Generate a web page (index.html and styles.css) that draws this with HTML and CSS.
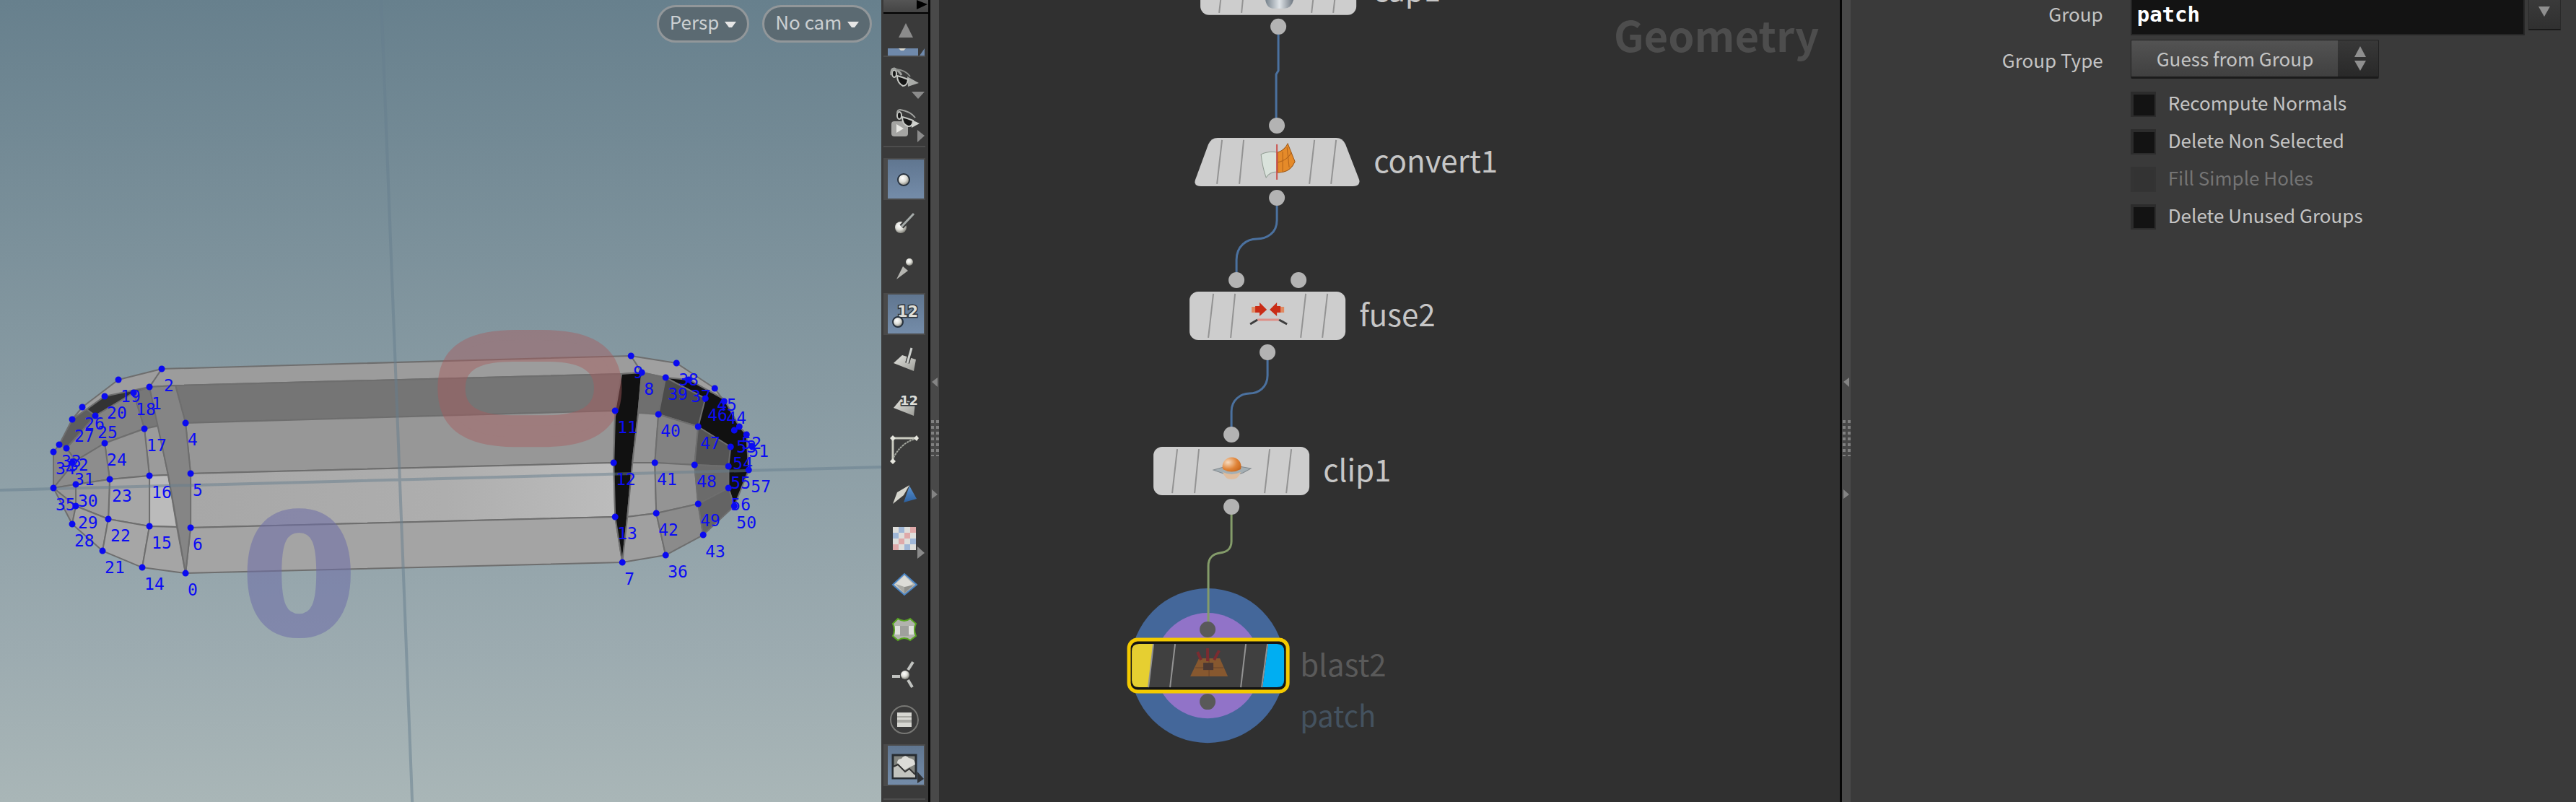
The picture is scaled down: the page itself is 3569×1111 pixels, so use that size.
FILE: index.html
```html
<!DOCTYPE html>
<html lang="en">
<head>
<meta charset="utf-8">
<title>Geometry</title>
<link rel="stylesheet" href="styles.css">
</head>
<body>
<main class="workspace">
  <section class="viewport" aria-label="Scene view">
    <svg class="scene" viewBox="0 0 1221 1111" preserveAspectRatio="xMidYMid slice">
      <defs>
        <linearGradient id="band" x1="0" x2="1" y1="0" y2="0">
          <stop offset="0" stop-color="#a7a7a7"/><stop offset=".6" stop-color="#aeaeae"/><stop offset="1" stop-color="#bcbcbc"/>
        </linearGradient>
      </defs>
      <g class="mesh">
        <path fill="#9c9c9c" d="M224 511 874 493 889 516 861 518 243 534 207 536Z"/>
        <path fill="#757575" d="M243 534 861 518 852 569 257 586Z"/>
        <path fill="#979797" d="M257 586 852 569 850 641 264 656Z"/>
        <path fill="url(#band)" d="M264 656 850 641 852 716 264 731Z"/>
        <path fill="#a4a4a4" d="M264 731 852 716 862 779 257 794Z"/>
        <path fill="#9e9e9e" d="M164 526 224 511 207 536 185 544 145 549 120 567 100 581 114 564Z"/>
        <path fill="#333" d="M120 567 145 549 207 536 185 545 132 576Z"/>
        <path fill="#5e5e5e" d="M120 567 132 576 92 621 82 616 100 581Z"/>
        <path fill="#777" d="M185 544 207 536 219 590 200 594Z"/>
        <path fill="#838383" d="M185 544 200 594 145 614 105 638 92 621 132 576Z"/>
        <path fill="#878787" d="M82 616 92 621 105 638 74 676 74 626Z"/>
        <path fill="#9b9b9b" d="M200 594 219 590 233 658 207 659Z"/>
        <path fill="#959595" d="M145 614 200 594 207 659 152 664Z"/>
        <path fill="#8d8d8d" d="M145 614 152 664 105 671 74 676 105 638Z"/>
        <path fill="#bbb" d="M207 659 233 658 245 730 207 729Z"/>
        <path fill="#a6a6a6" d="M152 664 207 659 207 729 150 719Z"/>
        <path fill="#9d9d9d" d="M105 671 152 664 150 719 105 701Z"/>
        <path fill="#999" d="M74 676 105 671 105 701Z"/>
        <path fill="#949494" d="M74 676 105 701 100 726Z"/>
        <path fill="#a2a2a2" d="M105 701 150 719 142 763 100 726Z"/>
        <path fill="#a6a6a6" d="M150 719 207 729 197 786 142 763Z"/>
        <path fill="#a5a5a5" d="M207 729 245 730 257 794 197 786Z"/>
        <path fill="#858585" d="M207 536 243 534 257 586 264 656 264 731 257 794 233 658Z"/>
        <path fill="#111" d="M861 518 889 516 884 572 876 641 869 716 862 779 852 716 850 641 852 569Z"/>
        <path fill="#a0a0a0" d="M874 493 937 503 990 538 1003 556 954 530 889 516Z"/>
        <path fill="#111" d="M922 523 954 526 1003 553 1024 591 1034 602 1037 651 1017 701 1009 676 1009 646 967 591Z"/>
        <path fill="#6f6f6f" d="M889 516 922 523 912 574 884 572Z"/>
        <path fill="#4b4b4b" d="M922 523 977 552 967 591 912 574Z"/>
        <path fill="#969696" d="M884 572 912 574 907 641 876 641Z"/>
        <path fill="#828282" d="M912 574 967 591 962 644 907 641Z"/>
        <path fill="#545454" d="M967 591 1012 619 1009 646 962 644Z"/>
        <path fill="#a4a4a4" d="M876 641 907 641 909 711 869 716Z"/>
        <path fill="#949494" d="M907 641 962 644 967 698 909 711Z"/>
        <path fill="#6b6b6b" d="M962 644 1009 646 1009 676 967 698Z"/>
        <path fill="#a0a0a0" d="M869 716 909 711 922 769 862 779Z"/>
        <path fill="#8b8b8b" d="M909 711 967 698 974 741 922 769Z"/>
        <path fill="#646464" d="M967 698 1009 676 1017 701 974 741Z"/>
      </g>
      <path class="grid-line" d="M0 679 1221 647M528 0 571 1111"/>
      <text class="marker red" transform="translate(603 615) rotate(-90)" x="77" y="248">0</text>
      <text class="marker blue" x="414" y="879">0</text>
      <path class="points" d="M224 511h0M164 526h0M207 536h0M185 544h0M145 549h0M114 564h0M132 576h0M100 581h0M200 594h0M145 614h0M257 586h0M82 616h0M92 621h0M74 626h0M264 656h0M207 659h0M152 664h0M100 641h0M105 671h0M74 676h0M105 701h0M100 726h0M150 719h0M207 729h0M264 731h0M142 763h0M197 786h0M257 794h0M874 493h0M937 503h0M889 516h0M922 523h0M954 526h0M990 538h0M977 552h0M1003 556h0M852 569h0M912 574h0M967 591h0M1017 596h0M1024 591h0M1034 602h0M1012 619h0M1041 618h0M850 641h0M907 641h0M962 644h0M1009 646h0M1037 651h0M1009 676h0M852 716h0M909 711h0M967 698h0M1017 701h0M974 741h0M922 769h0M862 779h0"/>
      <g class="point-numbers" transform="translate(3 31)">
        <text x="224" y="511">2</text><text x="164" y="526">19</text><text x="207" y="536">1</text><text x="185" y="544">18</text>
        <text x="145" y="549">20</text><text x="114" y="564">26</text><text x="132" y="576">25</text><text x="100" y="581">27</text>
        <text x="200" y="594">17</text><text x="145" y="614">24</text><text x="257" y="586">4</text><text x="82" y="616">33</text>
        <text x="92" y="621">32</text><text x="74" y="626">34</text><text x="264" y="656">5</text><text x="207" y="659">16</text>
        <text x="152" y="664">23</text><text x="100" y="641">31</text><text x="105" y="671">30</text><text x="74" y="676">35</text>
        <text x="105" y="701">29</text><text x="100" y="726">28</text><text x="150" y="719">22</text><text x="207" y="729">15</text>
        <text x="264" y="731">6</text><text x="142" y="763">21</text><text x="197" y="786">14</text><text x="257" y="794">0</text>
        <text x="874" y="493">9</text><text x="937" y="503">38</text><text x="889" y="516">8</text><text x="922" y="523">39</text>
        <text x="954" y="526">37</text><text x="990" y="538">45</text><text x="977" y="552">46</text><text x="1003" y="556">44</text>
        <text x="852" y="569">11</text><text x="912" y="574">40</text><text x="967" y="591">47</text><text x="1017" y="596">53</text>
        <text x="1024" y="591">52</text><text x="1034" y="602">51</text><text x="1012" y="619">54</text><text x="850" y="641">12</text>
        <text x="907" y="641">41</text><text x="962" y="644">48</text><text x="1009" y="646">55</text><text x="1037" y="651">57</text>
        <text x="1009" y="676">56</text><text x="852" y="716">13</text><text x="909" y="711">42</text><text x="967" y="698">49</text>
        <text x="1017" y="701">50</text><text x="974" y="741">43</text><text x="922" y="769">36</text><text x="862" y="779">7</text>
      </g>
    </svg>
    <div class="view-menus">
      <button type="button" class="pill">Persp<svg class="caret" viewBox="0 0 16 9"><path d="M0 0h16l-6 8h-4Z"/></svg></button>
      <button type="button" class="pill">No cam<svg class="caret" viewBox="0 0 16 9"><path d="M0 0h16l-6 8h-4Z"/></svg></button>
    </div>
  </section>

  <aside class="toolbar" aria-label="Display options">
    <svg class="shared-defs" aria-hidden="true">
      <defs>
        <radialGradient id="ball" cx=".4" cy=".35" r=".7"><stop offset="0" stop-color="#fff"/><stop offset=".5" stop-color="#deded8"/><stop offset="1" stop-color="#77776f"/></radialGradient>
        <linearGradient id="plate" x1="0" y1="0" x2="1" y2="1"><stop offset="0" stop-color="#e4e4df"/><stop offset="1" stop-color="#9b9c97"/></linearGradient>
        <linearGradient id="bluePlate" x1="0" y1="0" x2="0" y2="1"><stop offset="0" stop-color="#5b93d0"/><stop offset="1" stop-color="#2c609f"/></linearGradient>
      </defs>
    </svg>
    <button type="button" class="expand" aria-label="Expand"><svg viewBox="0 0 16 17"><path d="M0 0 15 6 0 13Z"/></svg></button>
    <button type="button" class="scroll-up" aria-label="Scroll up"><svg viewBox="0 0 20 20"><path d="M10 0 20 20H0Z"/></svg></button>
    <div class="clipped-tool"><svg viewBox="0 0 58 12"><path fill="#6f89ab" d="M6 0h42v10H6z"/><path fill="#d9d9d2" d="M21 0h10l-3 3h-4z"/><path fill="#6f89ab" d="M50 10l7-10v10z"/></svg></div>
    <button type="button" class="tool tall" aria-label="Ghost other objects"><svg viewBox="0 0 58 61">
      <path fill="#a9aba8" d="M33 27 49 36 34 41Z"/>
      <g fill="#151515" stroke="#c6c8c4" stroke-width="2"><ellipse cx="15" cy="23" rx="3" ry="5"/><path d="M19 26q8 2 15 5-1 9-7 9-8-4-8-14Z"/></g>
      <path fill="none" stroke="#a0a29f" stroke-width="3" d="M11 25q-1-9 4-9 6 2 10 9"/><path fill="none" stroke="#8c8e8b" stroke-width="2" d="M17 17q14 1 20 10"/>
      <path fill="#8b8b8b" d="M39 48h18l-9 10Z"/></svg></button>
    <button type="button" class="tool tall" aria-label="Flipbook view"><svg viewBox="0 0 58 61">
      <rect x="11" y="28" width="23" height="21" rx="4" fill="#a5a5a3"/><path fill="#e8e8e4" d="M18 32v12l10-6Z"/>
      <path fill="#d0d2ce" d="M39 26 50 31 39 37Z"/>
      <g fill="#151515" stroke="#c6c8c4" stroke-width="2"><ellipse cx="22" cy="20" rx="3" ry="5"/><path d="M26 22q8 2 15 5-1 9-7 8-8-3-8-13Z"/></g>
      <path fill="none" stroke="#a0a29f" stroke-width="2" d="M19 17q0-5 4-5 14 2 21 11"/>
      <path fill="#8b8b8b" d="M47 40v17l10-9Z"/></svg></button>
    <hr class="rule">
    <div class="tool-list">
      <button type="button" class="tool active" aria-label="Display points"><svg viewBox="0 0 58 58"><circle cx="28" cy="30" r="8" fill="url(#ball)" stroke="#27313d" stroke-width="2"/></svg></button>
      <button type="button" class="tool" aria-label="Display point normals"><svg viewBox="0 0 58 58"><circle cx="24" cy="34" r="8" fill="url(#ball)"/><path stroke="#3a3a3a" stroke-width="7" d="M25 33 41 16"/><path stroke="#a5aba9" stroke-width="3" d="M25 33 42 15"/></svg></button>
      <button type="button" class="tool" aria-label="Display point trails"><svg viewBox="0 0 58 58"><path fill="#b5b5b1" d="M27 25 34 31 18 43Z"/><circle cx="36" cy="19" r="5" fill="url(#ball)"/></svg></button>
      <button type="button" class="tool active" aria-label="Display point numbers"><svg viewBox="0 0 58 58"><text class="badge" x="19" y="33" font-size="21">12</text><circle cx="20" cy="40" r="7" fill="url(#ball)" stroke="#27313d" stroke-width="2"/></svg></button>
      <button type="button" class="tool" aria-label="Display primitive normals"><svg viewBox="0 0 58 58"><path fill="url(#plate)" d="M26 23 45 29 42 45 14 34Z"/><path stroke="#3a3a3a" stroke-width="6" d="M33 34 39 14"/><path stroke="#cdd0cd" stroke-width="3" d="M33 34 39 13"/></svg></button>
      <button type="button" class="tool" aria-label="Display primitive numbers"><svg viewBox="0 0 58 58"><path fill="url(#plate)" d="M24 22 44 27 42 45 14 34Z"/><text class="badge" x="23" y="30" font-size="18">12</text></svg></button>
      <button type="button" class="tool" aria-label="Display hulls"><svg viewBox="0 0 58 58"><path fill="none" stroke="#c9cabf" stroke-width="3" d="M46 13H13V45"/><path fill="none" stroke="#a4a79f" stroke-width="2" stroke-dasharray="3 1" d="M14 40Q24 20 44 14"/><path fill="#e6e6de" d="M13 9l4 4-4 4-4-4zM46 9l3 4-3 4-4-4zM13 41l4 4-4 4-4-4z"/></svg></button>
      <button type="button" class="tool" aria-label="Display backfaces"><svg viewBox="0 0 58 58"><path fill="url(#bluePlate)" d="M36 17 46 35 28 40Z"/><path fill="#d5d5cd" d="M13 42 19 26 36 16 28 30Z"/></svg></button>
      <button type="button" class="tool" aria-label="Display UV texture"><svg viewBox="0 0 58 58"><path fill="#dededb" d="M13 11h32v32H13z"/><path fill="#dfa9a9" d="M37 11h8v8h-8zM29 19h8v8h-8zM21 27h8v8h-8zM13 35h8v8h-8z"/><path fill="#9fb6d6" d="M21 11h8v8h-8zM13 19h8v8h-8zM37 27h8v8h-8zM29 35h8v8h-8z"/><path fill="#8b8b8b" d="M47 38v17l10-8Z"/></svg></button>
      <button type="button" class="tool" aria-label="Display hidden geometry"><svg viewBox="0 0 58 58"><path fill="url(#plate)" stroke="#4b85c5" stroke-width="2" d="M29 14 46 29 29 43 13 29Z"/><path fill="#dcdcd7" d="M29 17 41 28 29 33 17 28Z"/><path fill="#a9aaa5" d="M17 28 29 32V41Z"/><path fill="#8f908c" d="M29 32 41 30 29 41Z"/></svg></button>
      <button type="button" class="tool" aria-label="Display envelope"><svg viewBox="0 0 58 58"><path fill="#b2b3ae" stroke="#58a520" stroke-width="2" d="M20 13q9 6 17 0l8 7q-4 8 0 17l-8 6q-8-6-17 0l-7-6q4-8 0-17Z"/><path fill="#dfe0dc" d="M16 23h7v12h-7zM35 23h7v12h-7z"/><path fill="#9fa09c" d="M23 23h12v14H23z"/></svg></button>
      <button type="button" class="tool" aria-label="Display origin axes"><svg viewBox="0 0 58 58"><path stroke="#c0c2bf" stroke-width="4" d="M34 22 41 11M23 31H12M34 36l6 10"/><circle cx="30" cy="29" r="6" fill="url(#ball)"/></svg></button>
      <button type="button" class="tool" aria-label="Group list"><svg viewBox="0 0 58 58"><circle cx="29" cy="29" r="19" fill="none" stroke="#777774" stroke-width="2"/><path fill="#d7d7d2" d="M19 19h20v20H19z"/><path fill="#a8a8a3" d="M19 24h20v2H19zM19 29h20v4H19z"/></svg></button>
      <button type="button" class="tool active" aria-label="Background image"><svg viewBox="0 0 58 58"><path fill="#82847f" stroke="#272c31" stroke-width="3" d="M13 15h32v32H13z"/><path fill="#dcdcd8" d="M19 26q0-6 6-6 5-7 10-1 9 1 9 9l-8 4-7 4z"/><path fill="#c2c3be" d="M14 31 20 28 30 38 36 34 44 42V46H14Z"/><path fill="none" stroke="#333" stroke-width="2" d="M14 31 20 28 30 38 36 34 44 42"/><path fill="#2f3236" d="M47 38v16l9-6Z"/></svg></button>
    </div>
    <hr class="rule">
  </aside>

  <div class="splitter"><svg viewBox="0 0 12 170"><path d="M10 1v13L2 7zM2 156v13l8-6z"/><path class="grip" d="M3 60v50M10 60v50"/></svg></div>

  <section class="network" aria-label="Network editor">
    <svg class="graph" viewBox="1301 0 1247 1111" preserveAspectRatio="xMidYMid slice">
      <defs>
        <radialGradient id="orange" cx=".3" cy=".35" r=".8"><stop offset="0" stop-color="#f7dcc0"/><stop offset=".6" stop-color="#e08438"/><stop offset="1" stop-color="#c5651c"/></radialGradient>
        <linearGradient id="metal"><stop offset="0" stop-color="#75818b"/><stop offset=".5" stop-color="#dfe4e8"/><stop offset="1" stop-color="#6d7680"/></linearGradient>
        <g id="stripes"><path d="M33 3 26 64M63 3 57 64M161 3 154 64M191 3 184 64"/></g>
      </defs>
      <text class="context" x="2520" y="72">Geometry</text>

      <circle cx="1673" cy="922" r="107" fill="#44679a"/>
      <circle cx="1673" cy="922" r="73" fill="#9173c8"/>
      <g class="wires">
        <path d="M1771 47V98L1768 103V164"/>
        <path d="M1769 285V305C1769 323 1755 331 1741 331S1713 341 1713 360V378"/>
        <path d="M1756 498V520C1756 537 1743 545 1731 545S1706 554 1706 570V592"/>
        <path class="green" d="M1706 712V750C1706 762 1698 765 1690 766S1674 772 1674 784V862"/>
      </g>

      <g class="node">
        <rect x="1663" y="-46" width="216" height="67" rx="12"/>
        <use href="#stripes" x="1663" y="-46"/>
        <path fill="url(#metal)" d="M1753 0H1792Q1789 12 1779 12H1765Q1755 12 1753 0Z"/>
        <circle cx="1771" cy="37" r="11"/>
        <text x="1902" y="2">cap1</text>
      </g>
      <g class="node">
        <circle cx="1769" cy="174" r="11"/>
        <path class="body" d="M1687 191H1851Q1860 191 1864 200L1883 249Q1885 258 1874 258H1664Q1653 258 1656 249L1674 200Q1678 191 1687 191Z"/>
        <use href="#stripes" x="1660" y="191"/>
        <path fill="#d9e2db" stroke="#929d94" d="M1747 214Q1757 209 1769 211V238Q1759 238 1754 246Q1749 232 1747 214Z"/>
        <path fill="#e58a29" stroke="#9c5716" d="M1770 211Q1779 209 1784 199L1794 224Q1787 240 1770 239Z"/>
        <path fill="none" stroke="#b2631b" d="M1770 225Q1784 222 1789 211M1777 210V238M1783 204L1786 232"/>
        <path stroke="#cb5350" stroke-width="2" d="M1769 200V249"/>
        <circle cx="1769" cy="274" r="11"/>
        <text x="1903" y="239">convert1</text>
      </g>
      <g class="node">
        <circle cx="1713" cy="388" r="11"/><circle cx="1799" cy="388" r="11"/>
        <rect x="1648" y="404" width="216" height="67" rx="12"/>
        <use href="#stripes" x="1648" y="404"/>
        <path fill="#e08a62" d="M1734 425h10v8h-10zM1769 425h10v8h-10z"/>
        <path fill="#c92c16" d="M1739 424h6v-5l10 10-10 9v-5h-6zM1774 424h-5v-5l-10 10 10 9v-5h5z"/>
        <path stroke="#de8f88" stroke-width="3" d="M1742 443H1772"/>
        <path fill="none" stroke="#3e3e3e" stroke-width="3" d="M1732 449 1742 443M1772 443 1783 449"/>
        <circle cx="1756" cy="488" r="11"/>
        <text x="1883" y="452">fuse2</text>
      </g>
      <g class="node">
        <circle cx="1706" cy="602" r="11"/>
        <rect x="1598" y="619" width="216" height="67" rx="12"/>
        <use href="#stripes" x="1598" y="619"/>
        <path fill="#a4afb4" stroke="#82898e" d="M1681 651 1706 644 1733 649 1722 655 1706 660Z"/>
        <path fill="#dfbd9e" d="M1694 654Q1706 660 1719 654Q1716 664 1706 664Q1697 664 1694 654Z"/>
        <path fill="url(#orange)" d="M1694 650A13 13 0 1 1 1719 650Q1706 657 1694 650Z"/>
        <circle cx="1706" cy="702" r="11"/>
        <text x="1833" y="667">clip1</text>
      </g>
      <g class="node selected">
        <circle cx="1673" cy="872" r="11"/><circle cx="1673" cy="972" r="11"/>
        <rect class="ring" x="1564" y="886" width="220" height="72" rx="12"/>
        <path fill="#404040" d="M1598 892H1757L1749 952H1591Z"/>
        <path fill="#e6cf31" d="M1578 892H1598L1591 952H1578Q1568 952 1568 942V902Q1568 892 1578 892Z"/>
        <path fill="#00aef2" d="M1757 892H1769Q1779 892 1779 902V942Q1779 952 1769 952H1749Z"/>
        <path class="light-stripes" d="M1598 892 1591 952M1628 892 1621 952M1726 892 1719 952M1756 892 1748 952"/>
        <path fill="#87582f" d="M1661 912h29l11 25h-52z"/>
        <path fill="none" stroke="#69432a" d="M1656 925h39M1675 912v25"/>
        <path fill="#4b3833" d="M1667 918h14v10h-14z"/>
        <path fill="none" stroke="#7b2b30" stroke-width="4" d="M1659 903 1664 914M1673 898V916M1689 901 1682 914"/>
        <text x="1801" y="937">blast2</text>
        <text class="note" x="1801" y="1007">patch</text>
      </g>
    </svg>
  </section>

  <div class="splitter"><svg viewBox="0 0 12 170"><path d="M10 1v13L2 7zM2 156v13l8-6z"/><path class="grip" d="M3 60v50M10 60v50"/></svg></div>

  <form class="parameters" aria-label="Parameters">
    <label class="name" for="group">Group</label>
    <div class="group-field">
      <input id="group" type="text" value="patch">
      <button type="button" class="group-menu" aria-label="Choose group"><svg viewBox="0 0 16 14"><path d="M0 0h16L8 14Z"/></svg></button>
    </div>
    <label class="name type-name" for="group-type">Group Type</label>
    <div class="select-field">
      <select id="group-type"><option>Guess from Group</option></select>
      <svg viewBox="0 0 16 34"><path d="M8 0 16 15H0ZM0 20h16L8 34Z"/></svg>
    </div>
    <div class="toggles">
      <label><input type="checkbox">Recompute Normals</label>
      <label><input type="checkbox">Delete Non Selected</label>
      <label class="off"><input type="checkbox" disabled>Fill Simple Holes</label>
      <label><input type="checkbox">Delete Unused Groups</label>
    </div>
  </form>
</main>
</body>
</html>
```
FILE: styles.css
```css
* { box-sizing: border-box; }

body {
  margin: 0;
  background: #3a3a3a;
  color: #c4c4c4;
  font: 26px/32px "Noto Sans CJK SC", "Noto Sans", sans-serif;
}

button, input, select { font: inherit; color: inherit; margin: 0; }
button { border: 0; padding: 0; background: none; }
svg { display: block; }

.workspace {
  display: grid;
  grid-template-columns: 1221fr 68px 12px 1247fr 15px 1005fr;
  height: 100vh;
  overflow: hidden;
}

/* Scene view */
.viewport {
  position: relative;
  min-width: 0;
  overflow: hidden;
  background: linear-gradient(#67808d, #82969f 40%, #9cabb0 81%, #a9b6b7);
}
.scene, .graph { width: 100%; height: 100%; }
.mesh path { stroke: #6e6e6e; stroke-width: 2; stroke-linejoin: round; }
.grid-line { fill: none; stroke: #667d8e; stroke-opacity: .5; stroke-width: 4; }
.points { fill: none; stroke: #0a0af0; stroke-width: 9; stroke-linecap: round; }
.point-numbers { fill: #0c0cf4; font: 23px "DejaVu Sans Mono", monospace; }
.marker { text-anchor: middle; }
.red { fill: #a85c5e; stroke: #a85c5e; stroke-width: 14; opacity: .45; font-family: Roboto, sans-serif; font-size: 330px; }
.blue { fill: #6d6da8; stroke: #6d6da8; stroke-width: 4; opacity: .55; font-family: "DejaVu Sans", sans-serif; font-size: 232px; font-weight: bold; }

.view-menus { position: absolute; top: 7px; right: 13px; display: flex; gap: 18px; }
.pill {
  display: flex;
  align-items: center;
  gap: 8px;
  height: 52px;
  padding: 0 15px 6px;
  border: 3px solid #92979a;
  border-radius: 26px;
  background: #5b6a72;
  color: #ccd0d2;
}
.caret { width: 16px; height: 9px; margin-top: 8px; fill: #e6e6e6; }

/* Display options */
.toolbar {
  display: flex;
  flex-direction: column;
  padding: 0 4px 3px 3px;
  border-right: 3px solid #060606;
  background: #3a3a3a;
}
.shared-defs { position: absolute; width: 0; height: 0; }
.expand {
  display: flex;
  justify-content: flex-end;
  height: 19px;
  margin-right: -4px;
  border-bottom: 2px solid #000;
  background: linear-gradient(#555, #444);
}
.expand svg { width: 16px; height: 17px; }
.scroll-up { display: flex; justify-content: center; height: 48px; padding: 13px 0 0 4px; }
.scroll-up svg { width: 20px; height: 20px; fill: #8b8b8b; }
.clipped-tool { height: 12px; border-bottom: 2px solid #4b4b4b; }
.tool { display: block; width: 58px; height: 58px; }
.tall { height: 61px; }
.tool svg { width: 100%; height: 100%; }
.tool-list {
  flex: 1;
  display: flex;
  flex-direction: column;
  justify-content: space-between;
  margin: 15px 0 16px;
}
.active {
  background: linear-gradient(#607690, #748ca9) 6px 2px / 50px 54px no-repeat #4a4a4a;
}
.badge { font-family: "DejaVu Sans", sans-serif; font-weight: bold; fill: #deded8; stroke: #30363c; stroke-width: 3; paint-order: stroke; }
.rule { width: 100%; height: 2px; margin: 1px 0 0; border: 0; background: #4d4d4d; flex: none; }

.splitter { padding-top: 47vh; background: #494949; }
.splitter svg { width: 12px; height: 170px; fill: #848484; }
.splitter .grip { stroke: #808080; stroke-width: 4; stroke-dasharray: 4 4; }
.network + .splitter { border-left: 3px solid #060606; }

/* Network editor */
.network { min-width: 0; overflow: hidden; background: #303030; }
.graph text { fill: #c6c6c6; font-size: 42px; }
.graph .context { fill: #4d4d4d; font-size: 58px; font-weight: bold; text-anchor: end; }
.wires { fill: none; stroke: #4b719f; stroke-width: 3; }
.green { stroke: #849c6a; }
.node rect, .body { fill: #cdcdcd; }
.node use { stroke: #939393; stroke-width: 2; }
.node circle { fill: #b3b3b3; }
.graph .selected circle { fill: #595959; }
.node .ring { fill: #141414; stroke: #f4ca00; stroke-width: 5; }
.light-stripes { stroke: #939393; stroke-width: 2; }
.graph .selected text { fill: #5a5a5a; }
.graph .selected .note { fill: #44525f; font-size: 40px; }

/* Parameters */
.parameters {
  display: grid;
  grid-template-columns: 350px 1fr;
  column-gap: 38px;
  align-content: start;
}
.name { text-align: right; padding-top: 3px; }
.type-name { padding-top: 18px; }
.group-field { display: flex; align-items: start; gap: 5px; padding-right: 21px; }
.group-field input {
  flex: 1;
  min-width: 0;
  height: 49px;
  padding: 0 0 8px 7px;
  border: 2px solid #262626;
  border-top: 0;
  background: #131313;
  color: #fff;
  font: bold 29px "DejaVu Sans Mono", monospace;
}
.group-menu {
  display: flex;
  justify-content: center;
  width: 45px;
  height: 42px;
  padding-top: 9px;
  border: 1px solid #2a2a2a;
  border-top: 0;
  border-bottom: 2px solid #191919;
  background: linear-gradient(#3a3a3a, #303030);
}
.group-menu svg { width: 16px; height: 14px; fill: #8f8f8f; }
.select-field { position: relative; width: 344px; margin-top: 6px; }
.select-field select {
  width: 100%;
  height: 54px;
  padding: 0 0 0 35px;
  appearance: none;
  border: 1px solid #222;
  border-bottom: 3px solid #1b1b1b;
  border-radius: 2px;
  background: linear-gradient(#383838, #292929) right / 56px 100% no-repeat, linear-gradient(#535353, #404040);
}
.select-field svg { position: absolute; right: 18px; top: 9px; width: 16px; height: 34px; fill: #8f8f8f; pointer-events: none; }
.toggles { grid-column: 2; display: grid; row-gap: 17px; margin-top: 18px; }
.toggles label { display: flex; align-items: flex-start; gap: 17px; height: 35px; line-height: 30px; }
.toggles input {
  width: 35px;
  height: 35px;
  appearance: none;
  flex: none;
  border: solid #2c2c2c;
  border-width: 4px 2px 2px 4px;
  background: #131313;
}
.toggles .off { color: #747474; }
.toggles .off input { border-color: #343434; background: #333; }
```
